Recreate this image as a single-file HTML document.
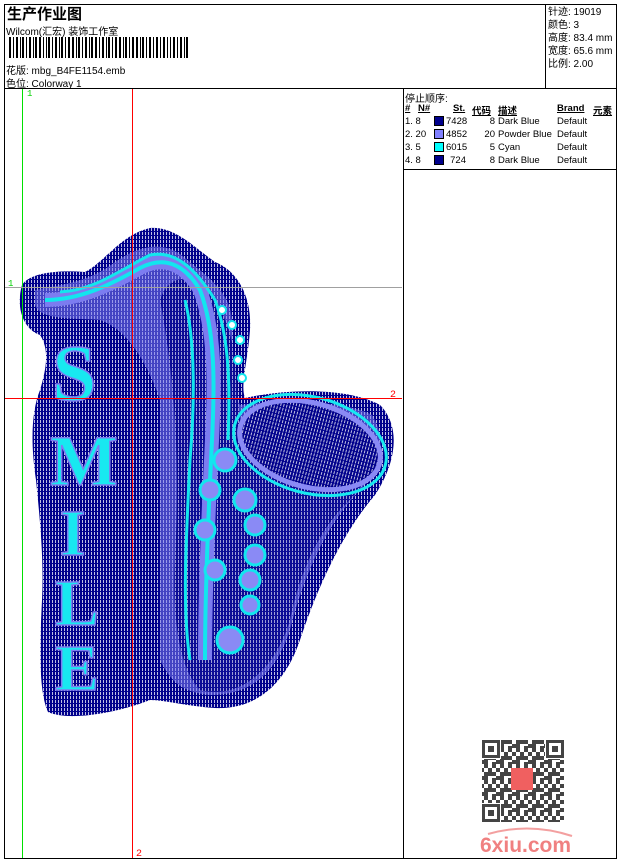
<!DOCTYPE html>
<html><head><meta charset="utf-8"><style>
body{margin:0;background:#fff;width:620px;height:860px;overflow:hidden;font-family:"Liberation Sans","Noto Sans CJK SC",sans-serif;}
.a{position:absolute;white-space:nowrap;color:#000}
</style></head><body>
<svg width="620" height="860" style="position:absolute;left:0;top:0" xmlns="http://www.w3.org/2000/svg">
<defs>
<pattern id="h" width="3" height="4" patternUnits="userSpaceOnUse"><rect width="3" height="4" fill="#0c0c96"/><rect x="1" y="0" width="1" height="3" fill="#fff" opacity="0.6"/></pattern>
<pattern id="h2" width="3" height="4" patternUnits="userSpaceOnUse"><rect width="3" height="4" fill="#00008c"/><rect x="1" y="0" width="1" height="3" fill="#fff" opacity="0.75"/></pattern>
<pattern id="q" width="16" height="16" patternUnits="userSpaceOnUse"><rect width="16" height="16" fill="#fff"/><g fill="#444"><rect x="0" y="0" width="4" height="4"/><rect x="8" y="0" width="4" height="8"/><rect x="4" y="4" width="4" height="4"/><rect x="12" y="4" width="4" height="4"/><rect x="0" y="8" width="8" height="4"/><rect x="12" y="10" width="4" height="6"/><rect x="4" y="12" width="4" height="4"/></g></pattern>
</defs>
<rect x="4.5" y="4.5" width="612" height="854" fill="none" stroke="#000"/>
<line x1="4" y1="88.5" x2="617" y2="88.5" stroke="#000"/>
<line x1="545.5" y1="4" x2="545.5" y2="88" stroke="#000"/>
<line x1="403.5" y1="88" x2="403.5" y2="859" stroke="#000"/>
<line x1="403" y1="169.5" x2="617" y2="169.5" stroke="#000"/>
<g fill="#000">
<rect x="9" y="37" width="2" height="21"/><rect x="13" y="37" width="1" height="21"/><rect x="16" y="37" width="2" height="21"/><rect x="20" y="37" width="1" height="21"/><rect x="22" y="37" width="2" height="21"/><rect x="26" y="37" width="1" height="21"/><rect x="29" y="37" width="2" height="21"/><rect x="33" y="37" width="1" height="21"/><rect x="35" y="37" width="2" height="21"/><rect x="39" y="37" width="2" height="21"/><rect x="43" y="37" width="1" height="21"/><rect x="46" y="37" width="1" height="21"/><rect x="48" y="37" width="2" height="21"/><rect x="52" y="37" width="1" height="21"/><rect x="55" y="37" width="2" height="21"/><rect x="59" y="37" width="1" height="21"/><rect x="61" y="37" width="2" height="21"/><rect x="65" y="37" width="1" height="21"/><rect x="68" y="37" width="2" height="21"/><rect x="72" y="37" width="2" height="21"/><rect x="76" y="37" width="1" height="21"/><rect x="78" y="37" width="2" height="21"/><rect x="82" y="37" width="1" height="21"/><rect x="85" y="37" width="2" height="21"/><rect x="89" y="37" width="1" height="21"/><rect x="91" y="37" width="2" height="21"/><rect x="95" y="37" width="2" height="21"/><rect x="99" y="37" width="1" height="21"/><rect x="102" y="37" width="2" height="21"/><rect x="106" y="37" width="1" height="21"/><rect x="108" y="37" width="2" height="21"/><rect x="112" y="37" width="1" height="21"/><rect x="115" y="37" width="2" height="21"/><rect x="119" y="37" width="2" height="21"/><rect x="123" y="37" width="1" height="21"/><rect x="125" y="37" width="2" height="21"/><rect x="129" y="37" width="1" height="21"/><rect x="132" y="37" width="2" height="21"/><rect x="136" y="37" width="2" height="21"/><rect x="140" y="37" width="1" height="21"/><rect x="142" y="37" width="2" height="21"/><rect x="146" y="37" width="1" height="21"/><rect x="149" y="37" width="2" height="21"/><rect x="153" y="37" width="1" height="21"/><rect x="156" y="37" width="2" height="21"/><rect x="160" y="37" width="1" height="21"/><rect x="163" y="37" width="2" height="21"/><rect x="167" y="37" width="1" height="21"/><rect x="170" y="37" width="1" height="21"/><rect x="173" y="37" width="2" height="21"/><rect x="177" y="37" width="1" height="21"/><rect x="180" y="37" width="2" height="21"/><rect x="184" y="37" width="1" height="21"/><rect x="186" y="37" width="2" height="21"/>
</g>
<path d="M22 285 C30 272 60 270 85 272 C105 262 120 235 150 228 C175 226 195 248 215 262 C240 272 252 300 250 330 C248 360 240 385 245 398 C290 388 350 388 380 405 C400 425 398 460 375 495 C345 530 320 580 300 640 C285 685 255 710 215 708 C185 706 165 700 150 700 C120 712 70 722 48 712 C38 690 40 640 42 600 C44 560 40 520 36 480 C30 440 32 410 40 390 C46 370 50 350 40 335 C25 330 15 310 22 285Z" fill="url(#h2)"/>
<path d="M35 290 C60 285 90 282 115 262 C140 245 165 240 185 258 C205 275 230 290 232 320 C234 350 228 380 240 405 C280 400 345 400 372 415 C388 440 380 470 360 490 C330 520 305 570 290 630 C275 675 250 695 210 695 C180 692 170 680 160 660 L160 400 C150 370 130 330 100 320 C70 318 40 320 35 305Z" fill="#7c7cf0" opacity="0.55"/>
<path d="M160 300 C175 380 180 460 175 560 C172 620 180 670 200 690 C240 700 275 670 290 620 C300 570 320 530 345 505 C370 480 380 455 372 430 C340 415 280 412 240 420 C235 380 240 340 215 300 C195 275 170 270 160 300Z" fill="url(#h)"/>
<ellipse cx="310" cy="445" rx="72" ry="42" transform="rotate(15 310 445)" fill="url(#h2)" stroke="#8a8af5" stroke-width="5"/>
<ellipse cx="310" cy="445" rx="78" ry="48" transform="rotate(15 310 445)" fill="none" stroke="#18e8f0" stroke-width="3"/>
<path d="M45 300 C80 300 110 285 140 268 C165 255 185 265 200 290 C215 330 215 380 212 440 C208 520 205 600 205 660" fill="none" stroke="#7c7cf0" stroke-width="14"/>
<path d="M45 300 C80 300 110 285 140 268 C165 255 185 265 200 290 C215 330 215 380 212 440 C208 520 205 600 205 660" fill="none" stroke="#12e6ee" stroke-width="4"/>
<path d="M60 292 C95 290 120 270 150 255 C175 250 195 268 215 300 C230 340 230 390 228 440" fill="none" stroke="#12e6ee" stroke-width="3"/>
<path d="M185 300 C195 340 195 400 190 460 C186 540 182 610 190 660" fill="none" stroke="#12e6ee" stroke-width="3"/>
<g fill="#8a8af5" stroke="#12e6ee" stroke-width="3">
<circle cx="225" cy="460" r="11"/><circle cx="245" cy="500" r="11"/><circle cx="255" cy="525" r="10"/><circle cx="255" cy="555" r="10"/><circle cx="250" cy="580" r="10"/><circle cx="250" cy="605" r="9"/><circle cx="230" cy="640" r="13"/><circle cx="210" cy="490" r="10"/><circle cx="205" cy="530" r="10"/><circle cx="215" cy="570" r="10"/>
</g>
<g fill="#fff" stroke="#12e6ee" stroke-width="2"><circle cx="222" cy="310" r="4"/><circle cx="232" cy="325" r="4"/><circle cx="240" cy="340" r="4"/><circle cx="238" cy="360" r="4"/><circle cx="242" cy="378" r="4"/></g>
<g font-family="Liberation Serif,serif" font-weight="bold" fill="#18e8f0" stroke="#7c7cf0" stroke-width="1.5">
<text x="52" y="400" font-size="80">S</text>
<text x="50" y="485" font-size="72">M</text>
<text x="60" y="555" font-size="66">I</text>
<text x="55" y="625" font-size="66">L</text>
<text x="55" y="690" font-size="66">E</text>
</g>
<line x1="22.5" y1="89" x2="22.5" y2="858" stroke="#00e000"/>
<line x1="5" y1="287.5" x2="402" y2="287.5" stroke="#a0a0a0"/>
<line x1="132.5" y1="89" x2="132.5" y2="858" stroke="#ff0000"/>
<line x1="5" y1="398.5" x2="402" y2="398.5" stroke="#ff0000"/>
<text x="27" y="96" font-size="9" fill="#00d000" font-family="Liberation Mono,monospace">1</text>
<text x="8" y="286" font-size="9" fill="#00d000" font-family="Liberation Mono,monospace">1</text>
<text x="390" y="397" font-size="10" fill="#ff0000" font-family="Liberation Mono,monospace">2</text>
<text x="136" y="856" font-size="10" fill="#ff0000" font-family="Liberation Mono,monospace">2</text>
<rect x="434.5" y="116.5" width="9" height="9" fill="#00008c" stroke="#000"/>
<rect x="434.5" y="129.5" width="9" height="9" fill="#8080ff" stroke="#000"/>
<rect x="434.5" y="142.5" width="9" height="9" fill="#00ffff" stroke="#000"/>
<rect x="434.5" y="155.5" width="9" height="9" fill="#00008c" stroke="#000"/>
<rect x="482" y="740" width="82" height="82" fill="url(#q)"/>
<g fill="#444">
<rect x="481" y="739" width="20" height="20" fill="#fff"/><rect x="545" y="739" width="20" height="20" fill="#fff"/><rect x="481" y="803" width="20" height="20" fill="#fff"/>
<rect x="482" y="740" width="18" height="18"/><rect x="485" y="743" width="12" height="12" fill="#fff"/><rect x="488" y="746" width="6" height="6"/>
<rect x="546" y="740" width="18" height="18"/><rect x="549" y="743" width="12" height="12" fill="#fff"/><rect x="552" y="746" width="6" height="6"/>
<rect x="482" y="804" width="18" height="18"/><rect x="485" y="807" width="12" height="12" fill="#fff"/><rect x="488" y="810" width="6" height="6"/>
</g>
<rect x="511" y="768" width="22" height="22" fill="#f06060"/>
<path d="M488 834 Q530 822 572 836" fill="none" stroke="#f3a0a0" stroke-width="2"/>
<text x="480" y="852" font-size="21" font-weight="bold" fill="#f08080" font-family="Liberation Sans,sans-serif">6xiu.com</text>
</svg>
<div class="a" style="left:7px;top:3px;font-size:15px;font-weight:bold">生产作业图</div>
<div class="a" style="left:6px;top:23px;font-size:10px">Wilcom(汇宏) 装饰工作室</div>
<div class="a" style="left:6px;top:62px;font-size:10px">花版: mbg_B4FE1154.emb</div>
<div class="a" style="left:6px;top:75px;font-size:10px">色位: Colorway 1</div>
<div class="a" style="left:548px;top:6px;font-size:10px;line-height:13px">针迹: 19019<br>颜色: 3<br>高度: 83.4 mm<br>宽度: 65.6 mm<br>比例: 2.00</div>
<div class="a" style="left:405px;top:90px;font-size:10px">停止顺序:</div>
<div class="a" style="left:405px;top:103px;font-size:9.5px;font-weight:bold;text-decoration:underline">#</div>
<div class="a" style="left:418px;top:103px;font-size:9.5px;font-weight:bold;text-decoration:underline">N#</div>
<div class="a" style="left:453px;top:103px;font-size:9.5px;font-weight:bold;text-decoration:underline">St.</div>
<div class="a" style="left:472px;top:103px;font-size:9.5px;font-weight:bold;text-decoration:underline">代码</div>
<div class="a" style="left:498px;top:103px;font-size:9.5px;font-weight:bold;text-decoration:underline">描述</div>
<div class="a" style="left:557px;top:103px;font-size:9.5px;font-weight:bold;text-decoration:underline">Brand</div>
<div class="a" style="left:593px;top:103px;font-size:9.5px;font-weight:bold;text-decoration:underline">元素</div>
<div class="a" style="left:405px;top:115px;font-size:9.5px;line-height:13px">1. 8<br>2. 20<br>3. 5<br>4. 8</div>
<div class="a" style="left:446px;top:115px;font-size:9.5px;line-height:13px;text-align:right;width:20px">7428<br>4852<br>6015<br>724</div>
<div class="a" style="left:470px;top:115px;font-size:9.5px;line-height:13px;text-align:right;width:25px">8<br>20<br>5<br>8</div>
<div class="a" style="left:498px;top:115px;font-size:9.5px;line-height:13px">Dark Blue<br>Powder Blue<br>Cyan<br>Dark Blue</div>
<div class="a" style="left:557px;top:115px;font-size:9.5px;line-height:13px">Default<br>Default<br>Default<br>Default</div>
</body></html>
